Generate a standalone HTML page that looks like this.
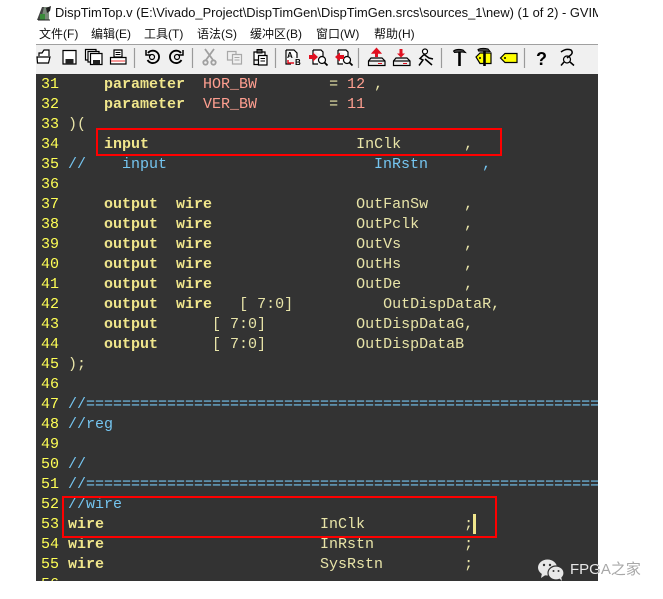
<!DOCTYPE html>
<html>
<head>
<meta charset="utf-8">
<style>
html,body{margin:0;padding:0;background:#fff;}
#p{position:relative;width:663px;height:599px;overflow:hidden;background:#fff;font-family:"Liberation Sans","Noto Sans CJK SC",sans-serif;}
#title{position:absolute;left:55px;top:4px;width:543px;height:18px;overflow:hidden;white-space:nowrap;font-size:12.9px;line-height:18px;color:#111;}
#menu{position:absolute;left:36px;top:24px;width:562px;height:20px;background:#fff;font-size:12px;line-height:20px;color:#111;}
#menu span{position:absolute;top:0;white-space:nowrap;}
#tb{position:absolute;left:36px;top:44px;width:562px;height:30px;background:#f0f0f0;border-top:1px solid #a0a0a0;box-sizing:border-box;}
#ed{position:absolute;left:36px;top:74px;width:562px;height:507px;background:#333;overflow:hidden;}
.l{position:absolute;left:5px;margin-top:1px;height:20px;white-space:pre;font:15px/20px "Liberation Mono",monospace;color:#e8e4a8;}
.l i{font-style:normal;color:#ffff55;display:inline-block;width:27px;}
.l b{color:#f0e68c;font-weight:bold;}
.l u{text-decoration:none;color:#ff9f90;}
.l s{text-decoration:none;color:#75c5f0;}
.r{position:absolute;border:2px solid #f00;box-sizing:border-box;}
#cur{position:absolute;left:437px;top:440px;width:3px;height:20px;background:#f0e68c;}
.wm{position:absolute;left:570px;top:560px;font-size:15px;line-height:20px;white-space:nowrap;width:74px;}
</style>
</head>
<body>
<div id="p">
<svg style="position:absolute;left:36px;top:5px" width="16" height="17" viewBox="0 0 16 17">
<path d="M1 15 L6 2 L10 2 L5 15Z" fill="#444"/><path d="M8 2 L13 2 L13 15 L5 15Z" fill="#7a8a7a"/><path d="M4 9 L9 9 L9 15 L4 15Z" fill="#3a8a3a"/><path d="M10 3 L15 1 L14 6 L11 8Z" fill="#222"/><path d="M2 15 L14 15" stroke="#222"/>
</svg>
<div id="title">DispTimTop.v (E:\Vivado_Project\DispTimGen\DispTimGen.srcs\sources_1\new) (1 of 2) - GVIM</div>
<div id="menu">
<span style="left:3px">文件(F)</span>
<span style="left:55px">编辑(E)</span>
<span style="left:108px">工具(T)</span>
<span style="left:161px">语法(S)</span>
<span style="left:214px">缓冲区(B)</span>
<span style="left:280px">窗口(W)</span>
<span style="left:338px">帮助(H)</span>
</div>
<div id="tb"></div>
<svg style="position:absolute;left:0;top:44px" width="620" height="30" viewBox="0 44 620 30" fill="none" stroke="#000" stroke-width="1.2">
<g stroke="#9a9a9a" stroke-width="1.2"><path d="M134.500 48V68M192.500 48V68M275.500 48V68M358.500 48V68M441.500 48V68M524.500 48V68"/></g>
<!-- open -->
<path d="M39 56 V53 H42 L44 50 H49 V56 M37 57 H50 L48.500 63 H37.500Z" fill="#fff"/>
<!-- save -->
<path d="M63 50.500 H76 V64 H63Z" fill="#fff"/><path d="M65.500 59 H73.500 V64 H65.500Z" fill="#222" stroke="none"/>
<!-- save all -->
<path d="M85.500 49.500 H96 V60 H85.500Z" fill="#fff"/><path d="M88 51.500 H99 V62 H88Z" fill="#fff"/><path d="M90.500 53.500 H102 V64.500 H90.500Z" fill="#fff"/><path d="M93 60 H100 V64.500 H93Z" fill="#222" stroke="none"/>
<!-- print -->
<path d="M114 50 H122 V57 H114Z" fill="#fff"/><path d="M115.500 52.500H120.500M115.500 54.500H120.500" stroke-width="1"/><path d="M110.500 57.500 H126 V64 H110.500Z" fill="#fff"/><path d="M111 61 H125" stroke="#e33" stroke-width="1"/>
<!-- undo -->
<path d="M148 53 A6.200 6.200 0 1 1 147.500 60" stroke-width="1.800"/><path d="M146 50 V55 H151" stroke-width="1.500"/><circle cx="152" cy="57" r="2.500" stroke-width="1.200"/>
<!-- redo -->
<path d="M181 53 A6.200 6.200 0 1 0 181.500 60" stroke-width="1.800"/><path d="M183 50 V55 H178" stroke-width="1.500"/><circle cx="177" cy="57" r="2.500" stroke-width="1.200"/>
<!-- cut -->
<g stroke="#a0a0a0" stroke-width="1.800"><path d="M205 49 L213 60M214 49 L206 60"/><circle cx="205.500" cy="62.500" r="2.200"/><circle cx="213.500" cy="62.500" r="2.200"/></g>
<!-- copy -->
<g stroke="#a8a8a8" stroke-width="1.200" fill="#f0f0f0"><path d="M227.500 51.500 H236 V60 H227.500Z"/><path d="M232.500 54.500 H241.500 V64 H232.500Z"/><path d="M234.500 57.500H239.500M234.500 60H239.500" stroke-width="1"/></g>
<!-- paste -->
<path d="M254 52 H265 V60 H254Z M254 60 V64.500 H258" fill="#fff"/><path d="M257 49.500 H262 V53 H257Z" fill="#555" stroke-width="1"/><path d="M258.500 55.500 H267 V65 H258.500Z" fill="#fff"/><path d="M260.500 58.500H265M260.500 61H265" stroke-width="1"/>
<!-- replace -->
<path d="M286 50 H294 L297 53 V58 M286 50 V64 H291" fill="#fff" stroke-width="1.200"/>
<text x="287" y="58" font-family="Liberation Sans,sans-serif" font-size="8" font-weight="bold" fill="#000" stroke="none">A</text>
<text x="295" y="65" font-family="Liberation Sans,sans-serif" font-size="8" font-weight="bold" fill="#000" stroke="none">B</text>
<path d="M288 60 V63 H294" stroke="#e01020" stroke-width="1.500"/>
<!-- find next -->
<path d="M313 50 H321 L323 52 V56 M313 50 V64 H318" fill="#fff" stroke-width="1.200"/><circle cx="322" cy="60" r="3.500" fill="#fff"/><path d="M324.500 62.500 L327.500 65.500" stroke-width="1.800"/><path d="M309 55 H313 V52.500 L318 57 L313 61.500 V59 H309Z" fill="#e01020" stroke="none"/>
<!-- find prev -->
<path d="M338 50 H346 L348 52 V56 M338 50 V64 H343" fill="#fff" stroke-width="1.200"/><circle cx="347" cy="60" r="3.500" fill="#fff"/><path d="M349.500 62.500 L352.500 65.500" stroke-width="1.800"/><path d="M344 55 H340 V52.500 L335 57 L340 61.500 V59 H344Z" fill="#e01020" stroke="none"/>
<!-- load -->
<path d="M372.500 53 L376.500 48.500 L380.500 53Z" fill="#e01020" stroke="#e01020" stroke-width="1.400"/><path d="M376.500 52 V57" stroke="#e01020" stroke-width="3"/>
<path d="M371 58 H382 L385 61 V65.500 H368.500 V61Z" fill="#eee"/><path d="M369 61 H384.500"/><path d="M378 63.500H382" stroke="#e01020" stroke-width="1"/>
<!-- save session -->
<path d="M401 49 V54" stroke="#e01020" stroke-width="3"/><path d="M397 53.500 H405 L401 57.500Z" fill="#e01020" stroke="none"/>
<path d="M396 58 H407 L410 61 V65.500 H393.500 V61Z" fill="#eee"/><path d="M394 61 H409.500"/><path d="M403 63.500H407" stroke="#e01020" stroke-width="1"/>
<!-- run -->
<circle cx="425" cy="51.500" r="2.500" fill="#fff" stroke-width="1.200"/><path d="M424 54.500 L420 58.500 L423 60 L419 65.500 M424 54.500 L429 58 L433 59 M425 59 L432 65" stroke-width="1.500"/>
<!-- hammer -->
<path d="M453.500 51 Q457 48.500 463 50 L465.500 52.500 L462 52 L454.500 52.500Z" fill="#444" stroke-width="1"/><path d="M459.500 52 V66" stroke-width="2.600"/>
<!-- tag jump -->
<path d="M476 57 L480 53 H491 V63.500 H480Z" fill="#ff0" stroke-width="1.200"/><circle cx="480" cy="58" r="1" fill="#000" stroke="none"/><path d="M478 49.500 Q482 47.500 488 49 L490 51.500 L478.500 51Z" fill="#444" stroke-width="1"/><path d="M484.500 51 V66" stroke-width="2.600"/>
<!-- tag -->
<path d="M500.500 58 L505 53.500 H517 V62.500 H505Z" fill="#ff0" stroke-width="1.200"/><circle cx="505" cy="58" r="1" fill="#000" stroke="none"/>
<!-- help -->
<text x="536" y="65" font-family="Liberation Sans,sans-serif" font-size="18" font-weight="bold" fill="#000" stroke="none">?</text>
<!-- help find -->
<path d="M561 52 Q566 48 571 50 Q574 53 569.500 56 L567 58" stroke-width="1.500"/><circle cx="567" cy="59.500" r="3.500" stroke-width="1.200"/><path d="M570 62 L574 65.500 M564 62 L561 65.500" stroke-width="1.500"/>
</svg>
<div id="ed">
<div class="l" style="top:0"><i>31</i>    <b>parameter</b>  <u>HOR_BW</u>        = <u>12</u> ,</div>
<div class="l" style="top:20px"><i>32</i>    <b>parameter</b>  <u>VER_BW</u>        = <u>11</u></div>
<div class="l" style="top:40px"><i>33</i>)(</div>
<div class="l" style="top:60px"><i>34</i>    <b>input</b>                       InClk       ,</div>
<div class="l" style="top:80px"><i>35</i><s>//    input                       InRstn      ,</s></div>
<div class="l" style="top:100px"><i>36</i></div>
<div class="l" style="top:120px"><i>37</i>    <b>output</b>  <b>wire</b>                OutFanSw    ,</div>
<div class="l" style="top:140px"><i>38</i>    <b>output</b>  <b>wire</b>                OutPclk     ,</div>
<div class="l" style="top:160px"><i>39</i>    <b>output</b>  <b>wire</b>                OutVs       ,</div>
<div class="l" style="top:180px"><i>40</i>    <b>output</b>  <b>wire</b>                OutHs       ,</div>
<div class="l" style="top:200px"><i>41</i>    <b>output</b>  <b>wire</b>                OutDe       ,</div>
<div class="l" style="top:220px"><i>42</i>    <b>output</b>  <b>wire</b>   [ 7:0]          OutDispDataR,</div>
<div class="l" style="top:240px"><i>43</i>    <b>output</b>      [ 7:0]          OutDispDataG,</div>
<div class="l" style="top:260px"><i>44</i>    <b>output</b>      [ 7:0]          OutDispDataB</div>
<div class="l" style="top:280px"><i>45</i>);</div>
<div class="l" style="top:300px"><i>46</i></div>
<div class="l" style="top:320px"><i>47</i><s>//===========================================================</s></div>
<div class="l" style="top:340px"><i>48</i><s>//reg</s></div>
<div class="l" style="top:360px"><i>49</i></div>
<div class="l" style="top:380px"><i>50</i><s>//</s></div>
<div class="l" style="top:400px"><i>51</i><s>//===========================================================</s></div>
<div class="l" style="top:420px"><i>52</i><s>//wire</s></div>
<div class="l" style="top:440px"><i>53</i><b>wire</b>                        InClk           ;</div>
<div class="l" style="top:460px"><i>54</i><b>wire</b>                        InRstn          ;</div>
<div class="l" style="top:480px"><i>55</i><b>wire</b>                        SysRstn         ;</div>
<div class="l" style="top:500px"><i>56</i></div>
<div id="cur"></div>
</div>
<div class="r" style="left:96px;top:128px;width:406px;height:28px"></div>
<div class="r" style="left:62px;top:496px;width:435px;height:42px"></div>
<svg style="position:absolute;left:537px;top:558px" width="28" height="24" viewBox="0 0 28 24">
<ellipse cx="10.500" cy="9.500" rx="9.500" ry="8" fill="#e8e8e8"/><path d="M5 15 L4 20 L10 16Z" fill="#e8e8e8"/>
<ellipse cx="19" cy="15" rx="8" ry="7" fill="#e8e8e8" stroke="#333" stroke-width="1.200"/><path d="M22 20 L25 23 L24 18Z" fill="#e8e8e8"/>
<circle cx="7" cy="7" r="1.200" fill="#333"/><circle cx="13" cy="7" r="1.200" fill="#333"/><circle cx="16.500" cy="13" r="1" fill="#333"/><circle cx="21.500" cy="13" r="1" fill="#333"/>
</svg>
<div class="wm" style="color:#e6e6e6;clip-path:inset(-5px 46px -5px -5px);">FPGA之家</div>
<div class="wm" style="color:#a8a8a8;clip-path:inset(-5px -5px -5px 28px);">FPGA之家</div>
</div>
</body>
</html>
